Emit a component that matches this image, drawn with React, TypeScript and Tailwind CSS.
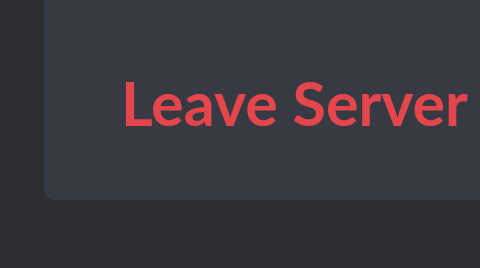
export default function App() {
  return (
    <div className="w-[480px] h-[268px] bg-[#2d2e32] overflow-hidden pl-[44px]">
      <div className="h-[200px] bg-[#383a43] rounded-bl-[12px] flex items-center pt-[5px]">
        <span
          className="pl-[77px] text-[61px] font-bold leading-none text-[#e4464b] whitespace-nowrap"
          style={{ fontFamily: 'Lato, sans-serif' }}
        >
          Leave Server
        </span>
      </div>
    </div>
  )
}
